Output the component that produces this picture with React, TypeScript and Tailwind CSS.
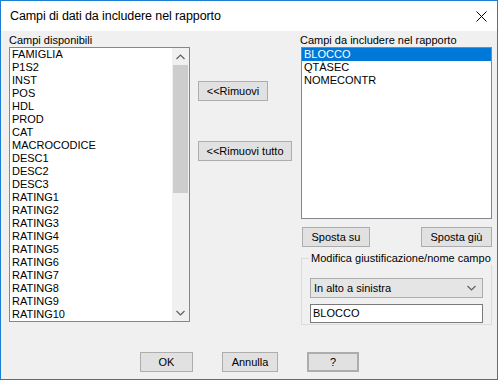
import React from 'react'

const DISPONIBILI = [
  'FAMIGLIA', 'P1S2', 'INST', 'POS', 'HDL', 'PROD', 'CAT', 'MACROCODICE', 'DESC1', 'DESC2', 'DESC3',
  'RATING1', 'RATING2', 'RATING3', 'RATING4', 'RATING5', 'RATING6', 'RATING7', 'RATING8', 'RATING9', 'RATING10',
]
const INCLUSI = ['BLOCCO', 'QTÀSEC', 'NOMECONTR']

const font = { fontFamily: '"Liberation Sans", Arial, sans-serif' }

function Btn({ label, className = '' }: { label: string; className?: string }) {
  return (
    <div className={`h-[20px] flex items-center justify-center bg-[#e1e1e1] border border-[#adadad] text-[11px] text-black whitespace-nowrap ${className}`}>
      {label}
    </div>
  )
}

function Chevron({ up, className = '' }: { up?: boolean; className?: string }) {
  return (
    <svg width="9" height="6" viewBox="0 0 9 6" className={className}>
      <path d={up ? 'M0.5 5 L4.5 1 L8.5 5' : 'M0.5 1 L4.5 5 L8.5 1'} fill="none" stroke="#606060" strokeWidth="1.2"/>
    </svg>
  )
}

export default function App() {
  return (
    <div style={font} className="w-[498px] h-[380px] border border-[#1a7fd4] bg-[#f0f0f0] flex flex-col text-[11px] leading-[13px] text-black select-none">
      {/* barra del titolo */}
      <div className="h-[30px] bg-white flex items-center justify-between pl-[9px] pr-[10px]">
        <span className="text-[12.5px] tracking-[-0.1px]">Campi di dati da includere nel rapporto</span>
        <svg width="11" height="11" viewBox="0 0 11 11">
          <path d="M0.5 0.5 L10.5 10.5 M10.5 0.5 L0.5 10.5" stroke="#000" strokeWidth="1"/>
        </svg>
      </div>

      <div className="flex pl-[8px] pt-[3px]">
        {/* campi disponibili */}
        <div className="w-[181px] flex flex-col">
          <span className="h-[13px]">Campi disponibili</span>
          <div className="h-[275px] border border-[#828790] bg-white flex">
            <div className="flex-1 flex flex-col pl-[2px]">
              {DISPONIBILI.map(c => <div key={c} className="h-[13px]">{c}</div>)}
            </div>
            <div className="w-[17px] flex flex-col bg-[#f0f0f0]">
              <div className="h-[17px] flex items-center justify-center"><Chevron up/></div>
              <div className="h-[128px] mx-[1px] bg-[#cdcdcd]"/>
              <div className="flex-1"/>
              <div className="h-[17px] flex items-center justify-center"><Chevron/></div>
            </div>
          </div>
        </div>

        {/* pulsanti centrali */}
        <div className="w-[103px] ml-[8px] flex flex-col items-start">
          <Btn label="<<Rimuovi" className="w-[70px] mt-[47px]"/>
          <Btn label="<<Rimuovi tutto" className="w-[94px] mt-[40px]"/>
        </div>

        {/* campi inclusi */}
        <div className="w-[191px] flex flex-col">
          <span className="h-[13px] -ml-[1px]">Campi da includere nel rapporto</span>
          <div className="h-[172px] border border-[#828790] bg-white flex flex-col">
            {INCLUSI.map((c, i) => (
              <div key={c} className={`h-[13px] pl-[2px] ${i === 0 ? 'bg-[#0078d7] text-white' : ''}`}>{c}</div>
            ))}
          </div>
          <div className="flex justify-between mt-[8px]">
            <Btn label="Sposta su" className="w-[68px] ml-[1px]"/>
            <Btn label="Sposta giù" className="w-[71px]"/>
          </div>
          <div className="relative mt-[11px] h-[67px] border border-[#dcdcdc] pl-[8px] pt-[19px]">
            <span className="absolute -top-[7px] left-[7px] px-[2px] bg-[#f0f0f0] whitespace-nowrap">Modifica giustificazione/nome campo</span>
            <div className="w-[173px] h-[20px] bg-[#e5e5e5] border border-[#adadad] flex items-center justify-between pl-[3px] pr-[6px]">
              <span>In alto a sinistra</span>
              <Chevron/>
            </div>
            <div className="w-[173px] h-[19px] mt-[6px] bg-white border border-[#7a7a7a] flex items-center pl-[2px]">
              BLOCCO
            </div>
          </div>
        </div>
      </div>

      {/* pulsanti in basso */}
      <div className="flex pl-[139px] mt-[27px]">
        <Btn label="OK" className="w-[53px]"/>
        <Btn label="Annulla" className="w-[56px] ml-[29px]"/>
        <Btn label="?" className="w-[52px] ml-[29px] border-2 border-[#0078d7]"/>
      </div>
    </div>
  )
}
